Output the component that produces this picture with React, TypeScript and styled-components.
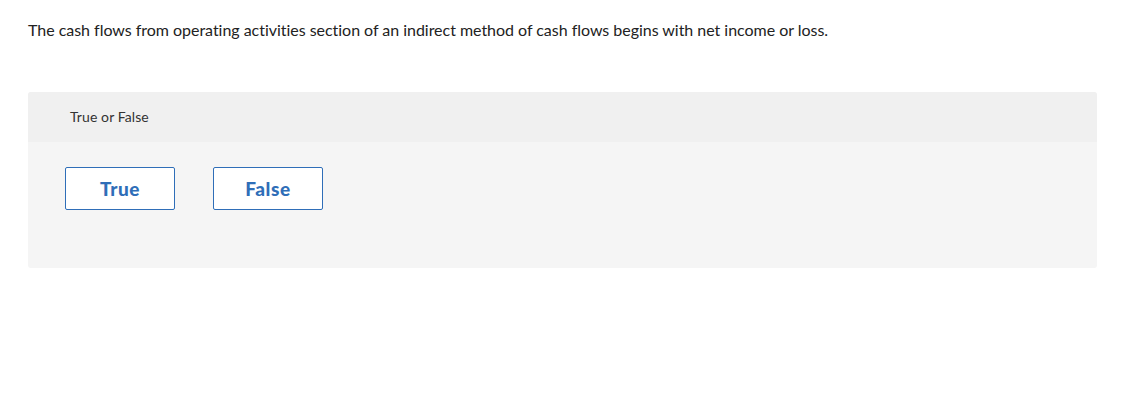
import styled, { createGlobalStyle } from "styled-components";

const GlobalStyle = createGlobalStyle`
    html, body { margin: 0; padding: 0; background: #ffffff; }
    body { font-family: Lato, "Open Sans", sans-serif; color: #222222; }
`

const Page = styled.div`
    padding: 20px 38px 0 28px;
`
const Question = styled.p`
    margin: 0; font-size: 16px; line-height: 20px; color: #222222;
    letter-spacing: -0.03px;
`
const Panel = styled.div`
    margin-top: 52px; width: 1069px;
    border-radius: 3px; overflow: hidden;
    background-color: #f5f5f5;
`
const PanelHeader = styled.div`
    box-sizing: border-box;
    height: 50px; padding: 0 42px 2px;
    display: flex; align-items: center;
    background-color: #f0f0f0;
    font-size: 14px; letter-spacing: 0.1px; color: #333333;
`
const Choices = styled.div`
    display: flex; column-gap: 38px;
    padding: 25px 37px 58px;
`
const Choice = styled.button`
    width: 110px; height: 43px; padding: 0;
    background: #ffffff; border: 1px solid #2f6eb8; border-radius: 2px;
    font-family: inherit; font-size: 19px; font-weight: 900; color: #2f6eb8;
    letter-spacing: 0.6px;
    cursor: pointer;
`

export default function App() {
    return (
        <>
            <GlobalStyle />
            <Page>
                <Question>The cash flows from operating activities section of an indirect method of cash flows begins with net income or loss.</Question>
                <Panel>
                    <PanelHeader>True or False</PanelHeader>
                    <Choices>
                        <Choice>True</Choice>
                        <Choice>False</Choice>
                    </Choices>
                </Panel>
            </Page>
        </>
    )
}
